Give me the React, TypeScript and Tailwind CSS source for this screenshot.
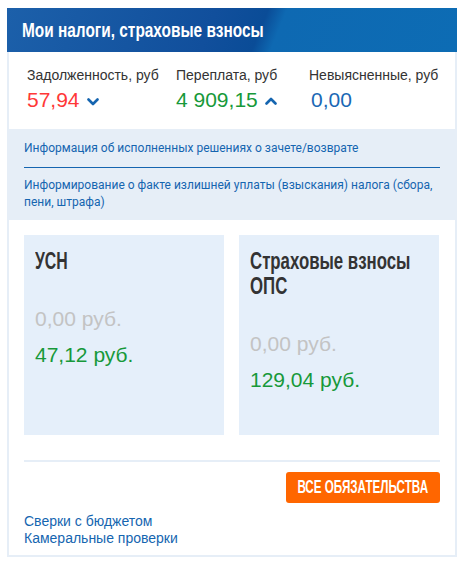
import React from "react";

function ChevronDown() {
  return (
    <svg width="12" height="8" viewBox="0 0 12 8" className="ml-[7px] mt-[4px]">
      <path d="M1.5 1.5 L6 6 L10.5 1.5" fill="none" stroke="#1565b0" strokeWidth="2.6" strokeLinecap="round" strokeLinejoin="round" />
    </svg>
  );
}
function ChevronUp() {
  return (
    <svg width="12" height="8" viewBox="0 0 12 8" className="ml-[7px] mt-[2px]">
      <path d="M1.5 6.5 L6 2 L10.5 6.5" fill="none" stroke="#1565b0" strokeWidth="2.6" strokeLinecap="round" strokeLinejoin="round" />
    </svg>
  );
}

export default function App() {
  return (
    <div className="pt-[8px] pl-[7px] bg-white w-[467px] h-[573px]" style={{ fontFamily: '"Liberation Sans", Arial, sans-serif' }}>
      <div className="w-[450px]">
        <div className="h-[44px] flex items-center pl-[15px] bg-[linear-gradient(112deg,#1c60aa_0%,#114f9c_45%,#0a4c97_56%,#0e69b2_60%,#0d6cb4_100%)]">
          <span className="inline-block whitespace-nowrap origin-left scale-x-[0.77] text-white font-bold text-[20px] leading-none">
            Мои налоги, страховые взносы
          </span>
        </div>
        <div className="border-2 border-t-0 border-[#e6eef7]">
          <div className="h-[77px] flex pl-[18px] pt-[14px]">
            <div className="w-[149px] flex flex-col">
              <span className="text-[14px] leading-[18px] text-[#333]">Задолженность, руб</span>
              <div className="flex items-center mt-[4px]">
                <span className="text-[21px] leading-[24px] text-[#ff3838]">57,94</span>
                <ChevronDown />
              </div>
            </div>
            <div className="w-[133px] flex flex-col">
              <span className="text-[14px] leading-[18px] text-[#333]">Переплата, руб</span>
              <div className="flex items-center mt-[4px]">
                <span className="text-[21px] leading-[24px] text-[#17993a]">4 909,15</span>
                <ChevronUp />
              </div>
            </div>
            <div className="flex flex-col">
              <span className="text-[14px] leading-[18px] text-[#333]">Невыясненные, руб</span>
              <div className="flex items-center mt-[4px] pl-[2px]">
                <span className="text-[21px] leading-[24px] text-[#1a68b5]">0,00</span>
              </div>
            </div>
          </div>
          <div className="bg-[#e6eef7] h-[91px] px-[15px] pt-[11px] text-[12px] leading-[17px] text-[#1565b0]" style={{ fontFamily: 'Roboto, "Liberation Sans", sans-serif' }}>
            <div className="pb-[10px] border-b border-[#1565b0]">Информация об исполненных решениях о зачете/возврате</div>
            <div className="pt-[9px]">Информирование о факте излишней уплаты (взыскания) налога (сбора, пени, штрафа)</div>
          </div>
          <div className="px-[15px] pt-[15px]">
            <div className="flex gap-[15px]">
              <div className="w-[200px] h-[200px] bg-[#e5effa] px-[11px] pt-[13px]">
                <div className="h-[25px]">
                  <span className="inline-block whitespace-nowrap origin-left scale-x-[0.66] text-[24px] leading-[25px] font-bold text-[#333]">УСН</span>
                </div>
                <div className="mt-[34px] text-[21px] leading-[24px] text-[#c3c3c3]">0,00 руб.</div>
                <div className="mt-[12px] text-[21px] leading-[24px] text-[#17993a]">47,12 руб.</div>
              </div>
              <div className="w-[200px] h-[200px] bg-[#e5effa] px-[11px] pt-[13px]">
                <div className="h-[50px] flex flex-col">
                  <span className="inline-block whitespace-nowrap origin-left scale-x-[0.7] text-[24px] leading-[25px] font-bold text-[#333]">Страховые взносы</span>
                  <span className="inline-block whitespace-nowrap origin-left scale-x-[0.7] text-[24px] leading-[25px] font-bold text-[#333]">ОПС</span>
                </div>
                <div className="mt-[34px] text-[21px] leading-[24px] text-[#c3c3c3]">0,00 руб.</div>
                <div className="mt-[12px] text-[21px] leading-[24px] text-[#17993a]">129,04 руб.</div>
              </div>
            </div>
            <div className="mt-[25px] h-[2px] bg-[#e6eef7]" />
            <div className="flex justify-end mt-[10px]">
              <button className="h-[31px] w-[154px] rounded-[3px] bg-[#ff6600] text-white flex items-center justify-center overflow-hidden">
                <span className="inline-block whitespace-nowrap scale-x-[0.63] font-bold text-[18.5px] leading-none">ВСЕ ОБЯЗАТЕЛЬСТВА</span>
              </button>
            </div>
            <div className="mt-[10px] pb-[8px] flex flex-col text-[14px] leading-[17px] text-[#1565b0]">
              <span>Сверки с бюджетом</span>
              <span>Камеральные проверки</span>
            </div>
          </div>
        </div>
      </div>
    </div>
  );
}
